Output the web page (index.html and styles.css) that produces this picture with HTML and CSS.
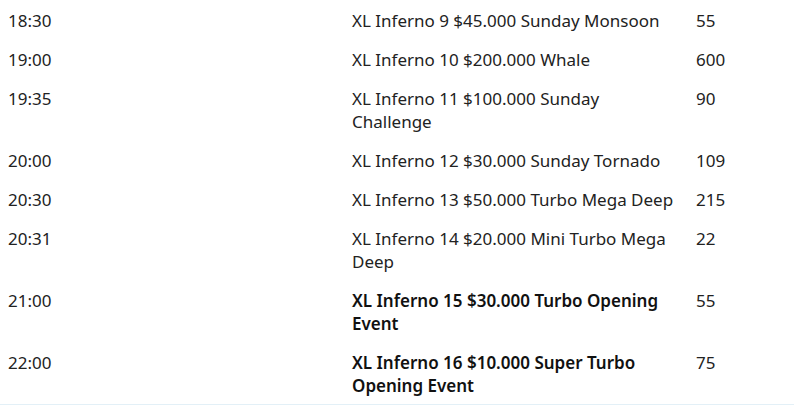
FILE: index.html
```html
<!DOCTYPE html>
<html lang="en">
<head>
<meta charset="utf-8">
<title>XL Inferno Schedule</title>
<link rel="stylesheet" href="styles.css">
</head>
<body>
<table class="schedule">
  <colgroup>
    <col class="c-time"><col class="c-name"><col class="c-count">
  </colgroup>
  <tbody>
    <tr><td>18:30</td><td>XL Inferno 9 $45.000 Sunday Monsoon</td><td>55</td></tr>
    <tr><td>19:00</td><td>XL Inferno 10 $200.000 Whale</td><td>600</td></tr>
    <tr><td>19:35</td><td>XL Inferno 11 $100.000 Sunday Challenge</td><td>90</td></tr>
    <tr><td>20:00</td><td>XL Inferno 12 $30.000 Sunday Tornado</td><td>109</td></tr>
    <tr><td>20:30</td><td>XL Inferno 13 $50.000 Turbo Mega Deep</td><td>215</td></tr>
    <tr><td>20:31</td><td>XL Inferno 14 $20.000 Mini Turbo Mega Deep</td><td>22</td></tr>
    <tr><td>21:00</td><td class="strong">XL Inferno 15 $30.000 Turbo Opening Event</td><td>55</td></tr>
    <tr><td>22:00</td><td class="strong">XL Inferno 16 $10.000 Super Turbo Opening Event</td><td>75</td></tr>
  </tbody>
</table>
</body>
</html>
```
FILE: styles.css
```css
html, body {
  margin: 0;
  padding: 0;
  background: #fff;
}
.schedule {
  width: 100%;
  border-collapse: collapse;
  table-layout: fixed;
  font-family: "Noto Sans", "Open Sans", sans-serif;
  font-size: 17px;
  line-height: 23px;
  color: #222;
  border-bottom: 1px solid #e3f0f7;
}
.c-time { width: 344px; }
.c-name { width: 344px; }
.schedule td {
  padding: 9px 8px 7px;
  vertical-align: top;
  text-align: left;
}
.schedule .strong {
  font-weight: 600;
  color: #111;
}
```
